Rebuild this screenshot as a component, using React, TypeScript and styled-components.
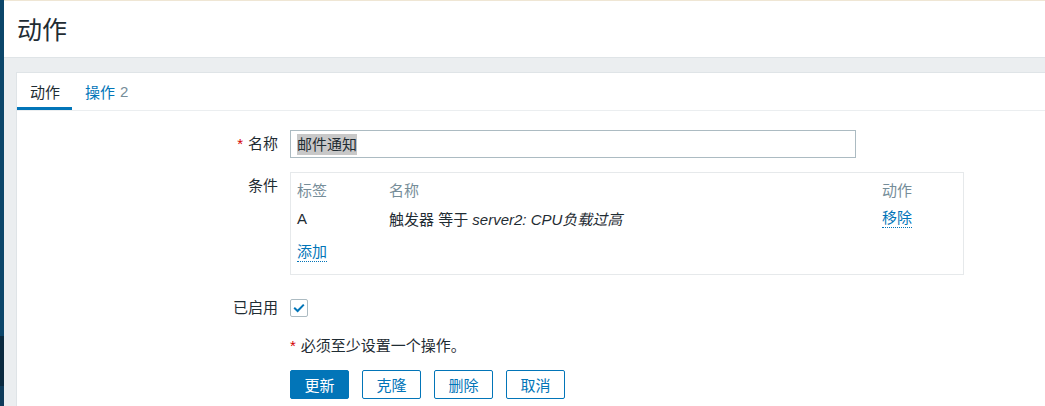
import React from "react";
import styled, { createGlobalStyle } from "styled-components";

const Global = createGlobalStyle`
  html, body { margin: 0; padding: 0; background: #ebeef0; }
  body {
    font-family: "Liberation Sans", "Noto Sans CJK SC", Arial, sans-serif;
    font-size: 15px;
    color: #1f2c33;
  }
`;

const Page = styled.div`
  display: flex;
  width: 1045px;
  height: 406px;
  overflow: hidden;
`;

const Sidebar = styled.aside`
  flex: 0 0 4px;
  background: linear-gradient(
    to bottom,
    #0c466a 0,
    #0c466a 336px,
    #0a2a3f 336px,
    #0a2a3f 386px,
    #0e3b5a 386px
  );
`;

const Main = styled.main`
  flex: 1;
  display: flex;
  flex-direction: column;
  border-top: 1px solid #efe6d4;
  min-width: 0;
`;

const Header = styled.header`
  height: 56px;
  background: #fff;
  border-bottom: 1px solid #dfe4e7;
  display: flex;
  align-items: center;
  padding-left: 13px;
`;

const Title = styled.h1`
  margin: 0;
  font-family: "Noto Sans CJK SC", sans-serif;
  font-size: 25px;
  font-weight: 400;
  color: #1f2c33;
  line-height: 1;
  padding-bottom: 1px;
`;

const Body = styled.div`
  flex: 1;
  padding: 14px 0 0 12px;
`;

const Card = styled.section`
  background: #fff;
  border: 1px solid #dfe4e7;
  border-right: none;
  height: 100%;
`;

const TabBar = styled.nav`
  display: flex;
  height: 37px;
  border-bottom: 1px solid #ebeef0;
`;

const Tab = styled.div<{ $active?: boolean }>`
  padding: 3px 12px 0 13px;
  display: flex;
  align-items: center;
  color: ${(p) => (p.$active ? "#1f2c33" : "#0275b8")};
  border-bottom: 3px solid ${(p) => (p.$active ? "#0275b8" : "transparent")};
  gap: 5px;
`;

const Count = styled.span`
  color: #768d99;
`;

const Form = styled.div`
  display: grid;
  grid-template-columns: 261px 1fr;
  column-gap: 12px;
  padding-top: 19px;
`;

const Label = styled.div<{ $lh?: number; $top?: number }>`
  text-align: right;
  line-height: ${(p) => p.$lh ?? 28}px;
  padding-top: ${(p) => p.$top ?? 0}px;
`;

const Req = styled.span`
  color: #d40000;
  margin-right: 5px;
`;

const Field = styled.div<{ $mb?: number; $mt?: number }>`
  margin-top: ${(p) => p.$mt ?? 0}px;
  margin-bottom: ${(p) => p.$mb ?? 0}px;
`;

const TextBox = styled.div`
  width: 558px;
  height: 26px;
  border: 1px solid #acbbc2;
  display: flex;
  align-items: center;
  padding-left: 6px;
`;

const Selected = styled.span`
  background: #c8c8c8;
  line-height: 21px;
`;

const CondBox = styled.div`
  box-sizing: border-box;
  width: 674px;
  height: 103px;
  border: 1px solid #e6e9eb;
  padding: 2px 0 0 6px;
`;

const CondGrid = styled.div`
  display: grid;
  grid-template-columns: 92px 493px 1fr;
  grid-auto-rows: 29px;
  align-items: center;
`;

const HeadCell = styled.div`
  color: #768d99;
`;

const Cell = styled.div``;

const Em = styled.i`
  font-style: italic;
`;

const Link = styled.a`
  color: #0275b8;
  text-decoration: none;
  border-bottom: 1px dotted #0275b8;
  cursor: pointer;
  justify-self: start;
  line-height: 18px;
`;

const AddRow = styled.div`
  margin-top: 10px;
  display: flex;
`;

const Check = styled.div`
  width: 16px;
  height: 16px;
  border: 1px solid #acbbc2;
  border-radius: 2px;
  display: flex;
  align-items: center;
  justify-content: center;
`;

const Note = styled.div`
  margin-top: 19px;
  line-height: 20px;
`;

const Buttons = styled.div`
  display: flex;
  gap: 13px;
  margin-top: 14px;
`;

const Button = styled.button<{ $primary?: boolean }>`
  width: 59px;
  height: 29px;
  border-radius: 2px;
  border: 1px solid #0275b8;
  background: ${(p) => (p.$primary ? "#0275b8" : "#fff")};
  color: ${(p) => (p.$primary ? "#fff" : "#0275b8")};
  font-family: "Liberation Sans", "Noto Sans CJK SC", sans-serif;
  font-size: 15px;
  padding: 0;
`;

export default function App() {
  return (
    <>
      <Global />
      <Page>
        <Sidebar />
        <Main>
          <Header>
            <Title>动作</Title>
          </Header>
          <Body>
            <Card>
              <TabBar>
                <Tab $active>动作</Tab>
                <Tab>
                  操作<Count>2</Count>
                </Tab>
              </TabBar>
              <Form>
                <Label>
                  <Req>*</Req>名称
                </Label>
                <Field $mb={14}>
                  <TextBox>
                    <Selected>邮件通知</Selected>
                  </TextBox>
                </Field>

                <Label>条件</Label>
                <Field $mb={23}>
                  <CondBox>
                    <CondGrid>
                      <HeadCell>标签</HeadCell>
                      <HeadCell>名称</HeadCell>
                      <HeadCell>动作</HeadCell>
                      <Cell>A</Cell>
                      <Cell>
                        触发器 等于 <Em>server2: CPU负载过高</Em>
                      </Cell>
                      <Link>移除</Link>
                    </CondGrid>
                    <AddRow>
                      <Link>添加</Link>
                    </AddRow>
                  </CondBox>
                </Field>

                <Label $lh={18} $top={1}>已启用</Label>
                <Field $mt={1}>
                  <Check>
                    <svg width="12" height="10" viewBox="0 0 12 10">
                      <path
                        d="M1.2 4.8 L4.6 8 L10.8 1.6"
                        fill="none"
                        stroke="#0275b8"
                        strokeWidth="2"
                      />
                    </svg>
                  </Check>
                </Field>

                <div />
                <Field>
                  <Note>
                    <Req>*</Req>必须至少设置一个操作。
                  </Note>
                  <Buttons>
                    <Button $primary>更新</Button>
                    <Button>克隆</Button>
                    <Button>删除</Button>
                    <Button>取消</Button>
                  </Buttons>
                </Field>
              </Form>
            </Card>
          </Body>
        </Main>
      </Page>
    </>
  );
}
